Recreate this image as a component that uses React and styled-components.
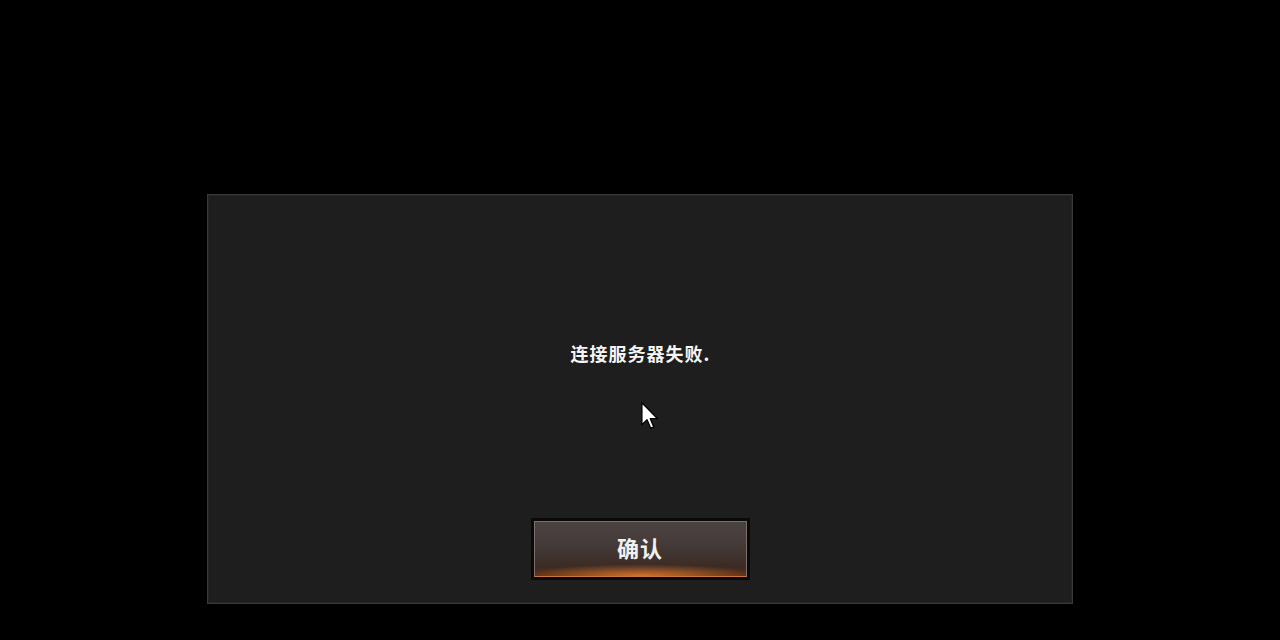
import React from "react";
import styled, { createGlobalStyle } from "styled-components";

const GlobalStyle = createGlobalStyle`
  html, body {
    margin: 0;
    padding: 0;
    background: #000;
    width: 1280px;
    height: 640px;
    overflow: hidden;
    font-family: "Noto Sans CJK SC", "Noto Sans", sans-serif;
  }
`;

const Screen = styled.div`
  width: 1280px;
  height: 640px;
  background: #000;
  display: flex;
  justify-content: center;
  padding-top: 194px;
  box-sizing: border-box;
`;

const Dialog = styled.div`
  position: relative;
  width: 866px;
  height: 410px;
  box-sizing: border-box;
  background: #1e1e1f;
  border: 1px solid #3a3a3c;
  box-shadow: inset 0 0 0 1px #242426;
  display: flex;
  flex-direction: column;
  align-items: center;
  padding: 146px 0 23px;
`;

const Message = styled.div`
  color: #f6f6f6;
  font-size: 18px;
  font-weight: 700;
  line-height: 24px;
  letter-spacing: 1px;
  padding-left: 1px;
`;

const Spacer = styled.div`
  flex: 1;
`;

const Button = styled.button`
  width: 219px;
  height: 62px;
  box-sizing: border-box;
  border: 3px solid #0b0a0a;
  padding: 0;
  background: #0b0a0a;
  cursor: pointer;
  font-family: inherit;
`;

const ButtonFace = styled.span`
  display: flex;
  align-items: center;
  justify-content: center;
  width: 100%;
  height: 100%;
  box-sizing: border-box;
  border: 1px solid #7c6e6a;
  border-bottom-color: #c8763e;
  background:
    radial-gradient(ellipse 55% 22% at 50% 100%, rgba(240, 130, 50, 0.8), rgba(240, 130, 50, 0) 100%),
    linear-gradient(to bottom, #4b4242 0%, #433a38 45%, #3c2b24 82%, #5a2e16 100%);
  color: #f2f0ee;
  font-size: 22px;
  font-weight: 700;
  letter-spacing: 1px;
  padding-bottom: 5px;
`;

const Cursor = styled.svg`
  position: absolute;
  left: 433px;
  top: 207px;
  width: 18px;
  height: 28px;
`;

export default function App() {
  return (
    <>
      <GlobalStyle />
      <Screen>
        <Dialog>
          <Message>连接服务器失败.</Message>
          <Spacer />
          <Button>
            <ButtonFace>确认</ButtonFace>
          </Button>
          <Cursor viewBox="0 0 12 19">
            <path
              d="M0.5 0.5 L0.5 15.5 L4 12 L6.5 17.8 L8.6 16.9 L6.2 11.3 L11 11.3 Z"
              fill="#fff"
              stroke="#000"
              strokeWidth="0.9"
              strokeLinejoin="round"
            />
          </Cursor>
        </Dialog>
      </Screen>
    </>
  );
}
